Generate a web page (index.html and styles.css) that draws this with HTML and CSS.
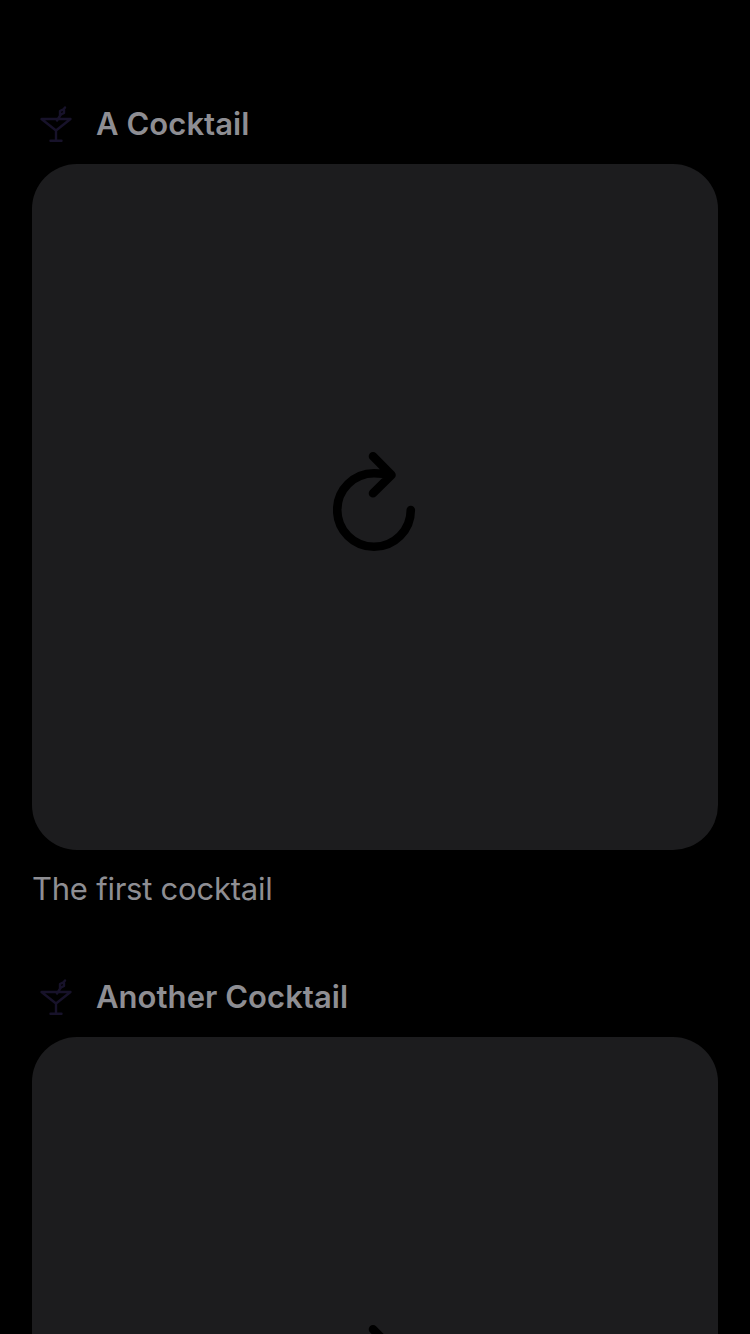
FILE: index.html
```html
<!DOCTYPE html>
<html lang="en">
<head>
<meta charset="utf-8">
<title>Cocktails</title>
<link rel="stylesheet" href="styles.css">
</head>
<body>
<svg class="symbols" aria-hidden="true">
  <symbol id="glass" viewBox="0 0 48 48">
    <path d="M9.500 19H38.500L24 30.500ZM24 30.500V40.500M18.500 40.700H29.500M25 20.500L28.500 15"/>
    <path d="M28 11L32 9V13L28 15ZM31.500 9.500L33 7.500"/>
  </symbol>
  <symbol id="reload" viewBox="0 0 84 100">
    <path d="M77.800 58A36.800 36.800 0 1 1 41 21.200Q50 21.200 58 23M40 4.300L58.500 23L40 41.300"/>
  </symbol>
</svg>
<main class="feed">
  <article class="post">
    <header class="post-header">
      <svg class="glass"><use href="#glass"/></svg>
      <h2 class="title">A Cocktail</h2>
    </header>
    <div class="photo"><svg class="reload"><use href="#reload"/></svg></div>
    <p class="caption">The first cocktail</p>
  </article>
  <article class="post">
    <header class="post-header">
      <svg class="glass"><use href="#glass"/></svg>
      <h2 class="title">Another Cocktail</h2>
    </header>
    <div class="photo"><svg class="reload"><use href="#reload"/></svg></div>
  </article>
</main>
</body>
</html>
```
FILE: styles.css
```css
body {
  margin: 0;
  background: #000;
  color: #8e8e93;
  font-family: Inter, "Liberation Sans", sans-serif;
}
.symbols {
  display: none;
}
.feed {
  box-sizing: border-box;
  height: 1334px;
  overflow: hidden;
  padding: 100px 32px 0;
  display: flex;
  flex-direction: column;
  gap: 57px;
}
.post {
  flex: none;
}
.post-header {
  display: flex;
  align-items: center;
  gap: 16px;
  height: 48px;
  margin-bottom: 16px;
}
.glass {
  width: 48px;
  height: 48px;
  fill: none;
  stroke: #17122a;
  stroke-width: 2.400px;
  stroke-linecap: round;
  stroke-linejoin: round;
}
.title {
  margin: 0;
  font-size: 31px;
  line-height: 48px;
  font-weight: 600;
  letter-spacing: 0.050px;
  white-space: nowrap;
}
.photo {
  display: flex;
  align-items: center;
  justify-content: center;
  height: 686px;
  border-radius: 45px;
  background: #1c1c1e;
}
.reload {
  width: 84px;
  height: 100px;
  margin-bottom: 10px;
  fill: none;
  stroke: #000;
  stroke-width: 8.600px;
  stroke-linecap: round;
  stroke-linejoin: round;
}
.caption {
  margin: 18px 0 0;
  font-size: 31px;
  line-height: 42px;
  height: 48px;
  letter-spacing: -0.240px;
}
```
